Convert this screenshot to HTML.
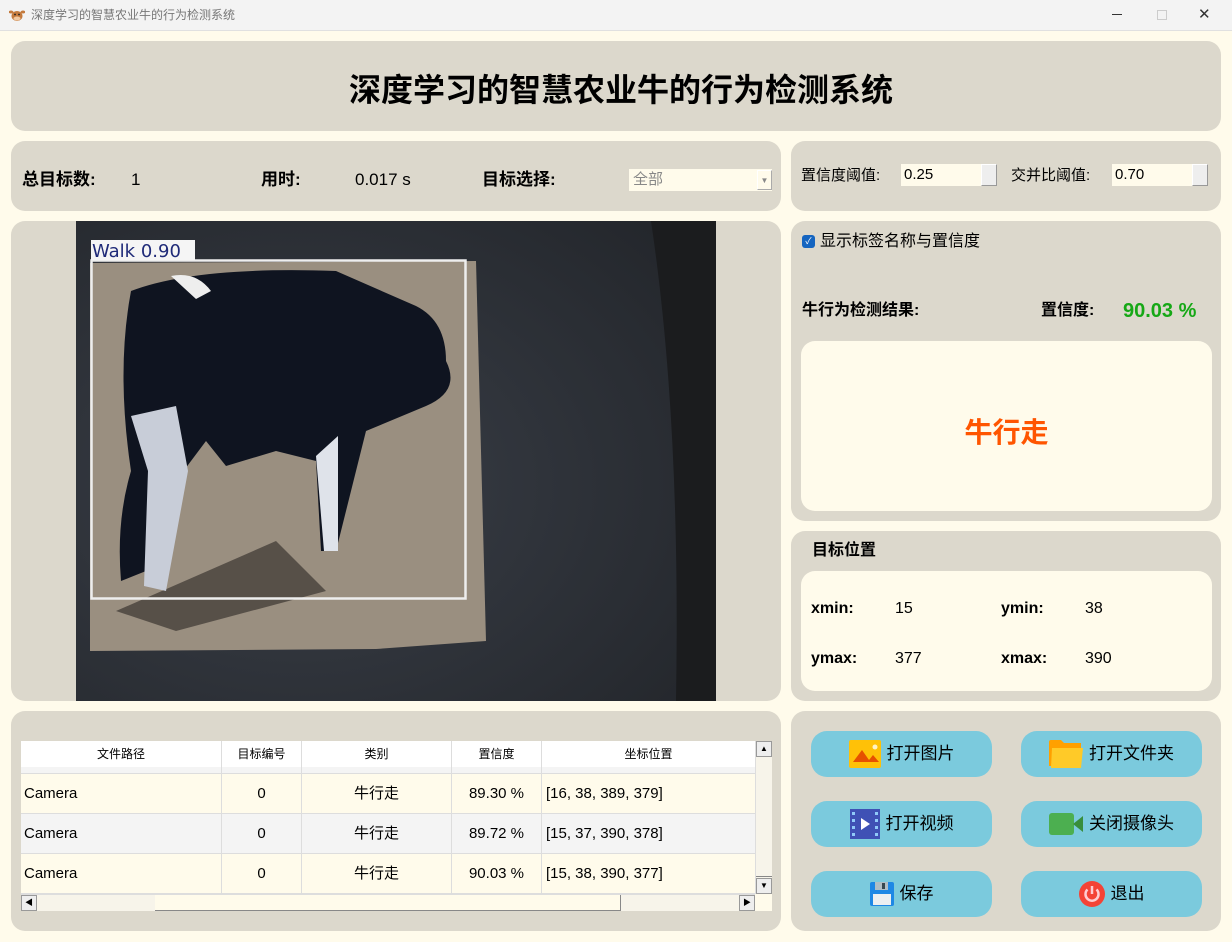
<!DOCTYPE html>
<html><head><meta charset="utf-8"><style>
*{margin:0;padding:0;box-sizing:border-box}
body{width:1232px;height:942px;background:#fffbeb;font-family:"Liberation Sans","Noto Sans CJK SC",sans-serif;position:relative;overflow:hidden;color:#000}
.a{position:absolute;line-height:20px}
.p{position:absolute;background:#dcd8cc;border-radius:14px}
.tb{left:0;top:0;width:1232px;height:31px;background:#f3f3f3;border-bottom:1px solid #e0e0e0}
.b{font-weight:bold}
.btn{position:absolute;width:181px;height:46px;background:#7bcadd;border-radius:16px;font-size:17px;display:flex;align-items:center;justify-content:center;gap:6px;line-height:20px}
.spin{position:absolute;background:#fffbeb;height:22px;font-size:15px;padding:0 3px;line-height:22px}
.spin i{position:absolute;right:0;top:0;width:16px;height:22px;background:#eee;border:1px solid #999;border-top-color:#fff;border-left-color:#fff}
.row{position:absolute;left:0;width:734px;height:40px;font-size:15px;line-height:40px;border-bottom:1px solid #ddd}
.row span{position:absolute;top:0;height:40px;border-right:1px solid #ddd;text-align:center}
</style></head><body>
<div class="a tb">
 <svg class="a" style="left:9px;top:8px" width="16" height="14" viewBox="0 0 16 14"><ellipse cx="8" cy="8" rx="5.5" ry="5" fill="#c47a3c"/><ellipse cx="2" cy="4" rx="2.5" ry="1.5" fill="#c47a3c"/><ellipse cx="14" cy="4" rx="2.5" ry="1.5" fill="#c47a3c"/><ellipse cx="8" cy="10.5" rx="3.5" ry="2" fill="#f0c8a0"/><circle cx="6" cy="6.5" r=".9" fill="#222"/><circle cx="10" cy="6.5" r=".9" fill="#222"/></svg>
 <div class="a" style="left:31px;top:5px;font-size:12px;color:#777">深度学习的智慧农业牛的行为检测系统</div>
 <div class="a" style="left:1112px;top:14px;width:10px;height:1px;background:#333"></div>
 <div class="a" style="left:1157px;top:10px;width:10px;height:10px;border:1px solid #ccc"></div>
 <div class="a" style="left:1198px;top:5px;font-size:15px;color:#333">✕</div>
</div>

<div class="p" style="left:11px;top:41px;width:1210px;height:90px"></div>
<div class="a b" style="left:0;width:1242px;top:70px;line-height:40px;text-align:center;font-size:32px">深度学习的智慧农业牛的行为检测系统</div>

<div class="p" style="left:11px;top:141px;width:770px;height:70px"></div>
<div class="a b" style="left:22px;top:170px;font-size:17px">总目标数:</div>
<div class="a" style="left:131px;top:170px;font-size:17px">1</div>
<div class="a b" style="left:261px;top:170px;font-size:17px">用时:</div>
<div class="a" style="left:355px;top:170px;font-size:17px">0.017 s</div>
<div class="a b" style="left:482px;top:170px;font-size:17px">目标选择:</div>
<div class="a" style="left:629px;top:169px;width:143px;height:22px;line-height:22px;background:#fffbeb;color:#888;font-size:15px;padding:0 4px">全部<i style="position:absolute;right:0;top:1px;width:15px;height:20px;border:1px solid #aaa;border-top-color:#fff;border-left-color:#fff;font-size:8px;font-style:normal;text-align:center;line-height:20px">▼</i></div>

<div class="p" style="left:791px;top:141px;width:430px;height:70px"></div>
<div class="a" style="left:801px;top:166px;font-size:15px">置信度阈值:</div>
<div class="spin" style="left:901px;top:164px;width:96px">0.25<i></i></div>
<div class="a" style="left:1011px;top:166px;font-size:15px">交并比阈值:</div>
<div class="spin" style="left:1112px;top:164px;width:96px">0.70<i></i></div>

<div class="p" style="left:11px;top:221px;width:770px;height:480px"></div>
<svg class="a" style="left:76px;top:221px" width="640" height="480" viewBox="0 0 640 480">
<defs><radialGradient id="g" cx="0.35" cy="0.55" r="0.8"><stop offset="0" stop-color="#3a3f48"/><stop offset="1" stop-color="#23262b"/></radialGradient></defs>
<rect width="640" height="480" fill="url(#g)"/>
<path d="M575 0 L640 0 L640 480 L600 480 Q605 200 575 0Z" fill="#1b1c1e"/>
<path d="M14 42 L400 40 L410 420 L300 428 L14 430Z" fill="#9a8f80"/>
<path d="M40 390 L200 320 L250 370 L100 410Z" fill="#3a3530" opacity=".7"/>
<path d="M55 70 Q120 45 260 50 L340 85 Q370 100 370 140 Q385 170 350 185 L290 210 L260 330 L245 330 L240 240 L200 230 L150 245 L130 220 L100 260 L70 350 L45 360 Q40 300 55 250 Q40 150 55 70Z" fill="#0f1420"/>
<path d="M55 195 L100 185 L112 250 L90 370 L68 365 L72 250Z" fill="#c8cdd8"/>
<path d="M240 235 L262 215 L262 330 L248 330Z" fill="#dfe3ea"/>
<path d="M95 55 Q120 50 135 70 L120 78Z" fill="#eee"/>
<rect x="15.5" y="39.5" width="374" height="338" fill="none" stroke="#eee" stroke-width="2.5"/>
<rect x="15" y="19" width="104" height="20" fill="#f5f5f5"/>
<text x="16" y="36" font-family="DejaVu Sans" font-size="18" fill="#1f2a78">Walk 0.90</text>
</svg>

<div class="p" style="left:791px;top:221px;width:430px;height:300px"></div>
<div class="a" style="left:802px;top:235px;width:13px;height:13px;background:#1565c0;border-radius:3px;color:#fff;font-size:9px;text-align:center;line-height:13px">✓</div>
<div class="a" style="left:820px;top:232px;font-size:16px">显示标签名称与置信度</div>
<div class="a b" style="left:802px;top:301px;font-size:16px">牛行为检测结果:</div>
<div class="a b" style="left:1041px;top:301px;font-size:16px">置信度:</div>
<div class="a b" style="left:1123px;top:301px;font-size:20px;color:#16a816">90.03 %</div>
<div class="a" style="left:801px;top:341px;width:411px;height:170px;background:#fffbeb;border-radius:14px"></div>
<div class="a b" style="left:801px;width:411px;top:418px;line-height:30px;text-align:center;font-size:28px;color:#ff5500">牛行走</div>

<div class="p" style="left:791px;top:531px;width:430px;height:170px"></div>
<div class="a b" style="left:812px;top:541px;font-size:16px">目标位置</div>
<div class="a" style="left:801px;top:571px;width:411px;height:120px;background:#fffbeb;border-radius:14px"></div>
<div class="a b" style="left:811px;top:599px;font-size:16px">xmin:</div>
<div class="a" style="left:895px;top:599px;font-size:16px">15</div>
<div class="a b" style="left:1001px;top:599px;font-size:16px">ymin:</div>
<div class="a" style="left:1085px;top:599px;font-size:16px">38</div>
<div class="a b" style="left:811px;top:649px;font-size:16px">ymax:</div>
<div class="a" style="left:895px;top:649px;font-size:16px">377</div>
<div class="a b" style="left:1001px;top:649px;font-size:16px">xmax:</div>
<div class="a" style="left:1085px;top:649px;font-size:16px">390</div>

<div class="p" style="left:11px;top:711px;width:770px;height:220px"></div>
<div class="a" style="left:21px;top:741px;width:751px;height:170px;background:#fffbeb;overflow:hidden;line-height:normal">
 <div class="row" style="top:0;height:26px;line-height:26px;font-size:12px;background:#fff;border-bottom:none"><span style="left:0;width:201px;height:26px">文件路径</span><span style="left:201px;width:80px;height:26px">目标编号</span><span style="left:281px;width:150px;height:26px">类别</span><span style="left:431px;width:90px;height:26px">置信度</span><span style="left:521px;width:213px;height:26px;border-right:none">坐标位置</span></div>
 <div class="row" style="top:26px;height:7px;background:#f4f4f4"><span style="left:0;width:201px;height:7px"></span><span style="left:201px;width:80px;height:7px"></span><span style="left:281px;width:150px;height:7px"></span><span style="left:431px;width:90px;height:7px"></span></div>
 <div class="row" style="top:33px"><span style="left:0;width:201px;text-align:left;padding-left:3px">Camera</span><span style="left:201px;width:80px">0</span><span style="left:281px;width:150px">牛行走</span><span style="left:431px;width:90px">89.30 %</span><span style="left:521px;width:213px;text-align:left;padding-left:4px;border-right:none">[16, 38, 389, 379]</span></div>
 <div class="row" style="top:73px;background:#f4f4f4"><span style="left:0;width:201px;text-align:left;padding-left:3px">Camera</span><span style="left:201px;width:80px">0</span><span style="left:281px;width:150px">牛行走</span><span style="left:431px;width:90px">89.72 %</span><span style="left:521px;width:213px;text-align:left;padding-left:4px;border-right:none">[15, 37, 390, 378]</span></div>
 <div class="row" style="top:113px"><span style="left:0;width:201px;text-align:left;padding-left:3px">Camera</span><span style="left:201px;width:80px">0</span><span style="left:281px;width:150px">牛行走</span><span style="left:431px;width:90px">90.03 %</span><span style="left:521px;width:213px;text-align:left;padding-left:4px;border-right:none">[15, 38, 390, 377]</span></div>
 <div class="a" style="right:0;top:0;width:17px;height:153px;background:#f7f4ea;border-left:1px solid #ddd;line-height:14px"><div style="height:16px;border:1px solid #999;background:#eee;font-size:8px;text-align:center">▲</div><div style="position:absolute;top:120px;width:16px;height:16px;border-bottom:1px solid #888"></div><div style="position:absolute;bottom:0;width:16px;height:16px;border:1px solid #999;background:#eee;font-size:8px;text-align:center">▼</div></div>
 <div class="a" style="left:0;bottom:0;width:734px;height:17px;background:#f7f4ea;border-top:1px solid #ddd"><div class="a" style="left:0;width:16px;height:16px;border:1px solid #999;background:#eee;font-size:8px;text-align:center;line-height:14px">◀</div><div class="a" style="left:134px;width:466px;height:16px;border-right:1px solid #888;border-bottom:1px solid #888;background:#fffbeb"></div><div class="a" style="right:0;width:16px;height:16px;border:1px solid #999;background:#eee;font-size:8px;text-align:center;line-height:14px">▶</div></div>
</div>

<div class="p" style="left:791px;top:711px;width:430px;height:220px"></div>
<div class="btn" style="left:811px;top:731px"><svg width="32" height="28" viewBox="0 0 32 28"><rect width="32" height="28" rx="2" fill="#ffc107"/><path d="M4 22 L13 10 L20 20 L24 15 L30 22Z" fill="#e65100"/><circle cx="26" cy="7" r="2.5" fill="#fff3c4"/></svg>打开图片</div>
<div class="btn" style="left:1021px;top:731px"><svg width="34" height="28" viewBox="0 0 34 28"><path d="M0 2 Q0 0 2 0 L12 0 L15 3 L32 3 L32 26 L0 26Z" fill="#ffa000"/><path d="M3 8 L34 8 L32 28 L2 28Z" fill="#ffca28"/></svg>打开文件夹</div>
<div class="btn" style="left:811px;top:801px"><svg width="30" height="30" viewBox="0 0 30 30"><rect width="30" height="30" fill="#3f51b5"/><g fill="#90caf9"><rect x="2" y="3" width="3" height="3"/><rect x="2" y="10" width="3" height="3"/><rect x="2" y="17" width="3" height="3"/><rect x="2" y="24" width="3" height="3"/><rect x="25" y="3" width="3" height="3"/><rect x="25" y="10" width="3" height="3"/><rect x="25" y="17" width="3" height="3"/><rect x="25" y="24" width="3" height="3"/></g><path d="M11 9 L20 15 L11 21Z" fill="#fff"/></svg>打开视频</div>
<div class="btn" style="left:1021px;top:801px"><svg width="34" height="22" viewBox="0 0 34 22"><rect width="25" height="22" rx="3" fill="#4caf50"/><path d="M24 11 L34 3 L34 19Z" fill="#388e3c"/></svg>关闭摄像头</div>
<div class="btn" style="left:811px;top:871px"><svg width="24" height="24" viewBox="0 0 24 24"><rect width="24" height="24" rx="2" fill="#1e88e5"/><rect x="5" y="0" width="13" height="8" fill="#b0bec5"/><rect x="12" y="1" width="3" height="6" fill="#37474f"/><rect x="3" y="12" width="18" height="11" fill="#eceff1"/></svg>保存</div>
<div class="btn" style="left:1021px;top:871px"><svg width="26" height="26" viewBox="0 0 26 26"><circle cx="13" cy="13" r="13" fill="#f44336"/><path d="M8.5 8.5 A6.5 6.5 0 1 0 17.5 8.5" fill="none" stroke="#ffcdd2" stroke-width="2.5"/><line x1="13" y1="5" x2="13" y2="13" stroke="#ffcdd2" stroke-width="2.5"/></svg>退出</div>
</body></html>
